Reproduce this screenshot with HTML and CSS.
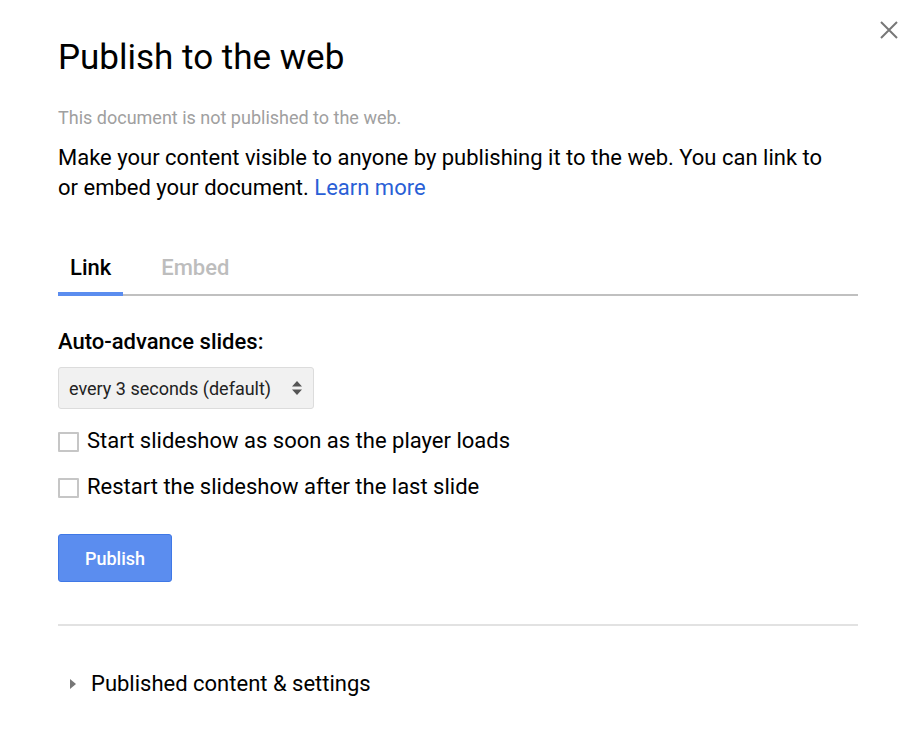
FILE: index.html
```html
<!DOCTYPE html>
<html lang="en">
<head>
    <meta charset="UTF-8">
    <meta name="viewport" content="width=device-width, initial-scale=1.0">
    <title>Publish to the web</title>
    <link rel="stylesheet" href="styles.css">
</head>
<body>
    <div class="dialog">
        <button class="close-button" aria-label="Close">
            <svg width="18" height="18" viewBox="0 0 18 18">
                <path d="M1 1 L17 17 M17 1 L1 17" stroke="#777" stroke-width="2" fill="none"/>
            </svg>
        </button>
        <h1 class="title">Publish to the web</h1>
        <div class="status">This document is not published to the web.</div>
        <p class="intro">Make your content visible to anyone by publishing it to the web. You can link to or embed your document. <a href="#" class="learn-more">Learn more</a></p>

        <div class="tabs">
            <div class="tab active">Link</div>
            <div class="tab">Embed</div>
        </div>

        <div class="field-label">Auto-advance slides:</div>
        <div class="select-box">
            <span>every 3 seconds (default)</span>
            <svg class="select-arrows" width="10" height="16" viewBox="0 0 10 16">
                <path d="M5 1 L10 6.5 L0 6.5 Z M5 15 L10 9.5 L0 9.5 Z" fill="#555"/>
            </svg>
        </div>

        <label class="check-row"><span class="checkbox"></span>Start slideshow as soon as the player loads</label>
        <label class="check-row second"><span class="checkbox"></span>Restart the slideshow after the last slide</label>

        <button class="publish-button">Publish</button>

        <div class="separator"></div>

        <div class="settings-toggle">
            <span class="triangle"></span>Published content &amp; settings
        </div>
    </div>
</body>
</html>
```

FILE: styles.css
```css
body {
    margin: 0;
    font-family: Roboto, "Liberation Sans", Arial, sans-serif;
    color: #000;
    background-color: #fff;
}
.dialog {
    position: relative;
    width: 800px;
    padding: 38px 0 40px 58px;
}
.close-button {
    position: absolute;
    top: 21px;
    left: 880px;
    width: 18px;
    height: 18px;
    padding: 0;
    border: none;
    background: none;
    cursor: pointer;
}
.close-button svg {
    display: block;
}
.title {
    margin: 0;
    font-size: 35px;
    font-weight: 400;
    line-height: 40px;
}
.status {
    margin-top: 30px;
    font-size: 18px;
    line-height: 20px;
    color: #a0a0a0;
}
.intro {
    max-width: 780px;
    margin: 15px 0 0;
    font-size: 22px;
    line-height: 30px;
}
.learn-more {
    color: #2a5fd6;
    text-decoration: none;
}
.tabs {
    display: flex;
    gap: 26px;
    margin-top: 53px;
    border-bottom: 2px solid #c0c0c0;
}
.tab {
    padding: 0 12px 12px;
    margin-bottom: -2px;
    font-size: 22px;
    line-height: 24px;
    font-weight: 500;
    color: #bdbdbd;
    border-bottom: 4px solid transparent;
    cursor: pointer;
}
.tab.active {
    color: #000;
    border-bottom-color: #5b8def;
}
.field-label {
    margin-top: 34px;
    font-size: 22px;
    line-height: 24px;
    font-weight: 500;
}
.select-box {
    display: flex;
    align-items: center;
    justify-content: space-between;
    box-sizing: border-box;
    width: 256px;
    height: 42px;
    margin-top: 13px;
    padding: 0 11px 0 10px;
    background-color: #f1f1f1;
    border: 1px solid #dcdcdc;
    border-radius: 3px;
    font-size: 18px;
    color: #222;
}
.check-row {
    display: flex;
    align-items: center;
    margin-top: 20px;
    font-size: 22px;
    line-height: 24px;
    cursor: pointer;
}
.check-row.second {
    margin-top: 22px;
}
.checkbox {
    box-sizing: border-box;
    width: 21px;
    height: 20px;
    margin: 2px 8px 0 0;
    border: 2px solid #c6c6c6;
    border-radius: 1px;
    background-color: #fff;
}
.publish-button {
    display: block;
    box-sizing: border-box;
    width: 114px;
    height: 48px;
    margin-top: 35px;
    padding: 0;
    font-family: inherit;
    font-size: 18px;
    font-weight: 500;
    color: #fff;
    background-color: #5b8def;
    border: 1px solid #3f78e6;
    border-radius: 3px;
    cursor: pointer;
}
.separator {
    margin-top: 42px;
    height: 2px;
    background-color: #e2e2e2;
}
.settings-toggle {
    display: flex;
    align-items: center;
    margin-top: 46px;
    font-size: 22px;
    line-height: 24px;
    cursor: pointer;
}
.triangle {
    width: 0;
    height: 0;
    margin: 0 15px 0 12px;
    border-top: 5px solid transparent;
    border-bottom: 5px solid transparent;
    border-left: 6px solid #777;
}
```
